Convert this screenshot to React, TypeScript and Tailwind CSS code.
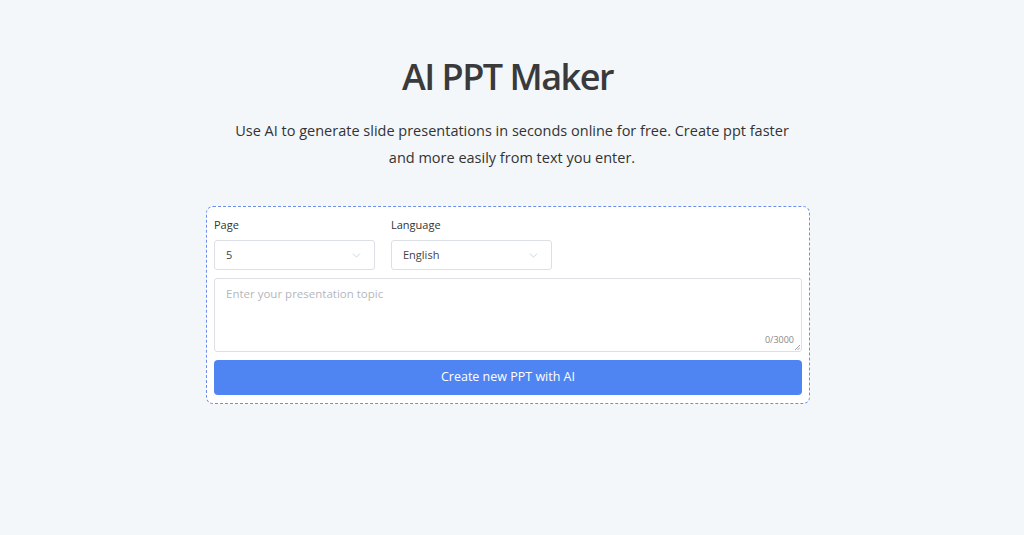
import { ChevronDown } from "lucide-react";

function FieldSelect({ label, value }: { label: string; value: string }) {
  return (
    <div className="w-[161px]">
      <div className="mb-[7px] text-[11px] leading-[16px] text-[#333]">{label}</div>
      <div className="flex h-[30px] items-center justify-between rounded-[3px] border border-[#dcdfe6] bg-white px-[11px] text-[11px] text-[#444]">
        <span>{value}</span>
        <ChevronDown className="h-[13px] w-[13px] text-[#b8bcc4]" strokeWidth={1.2} />
      </div>
    </div>
  );
}

export default function App() {
  return (
    <main
      className="min-h-[535px] bg-[#f4f7fa] text-[#333]"
      style={{ fontFamily: '"Open Sans", "Noto Sans", sans-serif' }}
    >
      <div className="flex flex-col items-center pt-[52px]">
        <h1 className="mr-[9px] text-[36px] font-semibold leading-[50px] tracking-[-1.5px] text-[#3a3a3a]">
          AI PPT Maker
        </h1>
        <p className="mt-[15px] w-[580px] text-center text-[14.5px] leading-[27px] text-[#333]">
          Use AI to generate slide presentations in seconds online for free. Create ppt faster and more easily from text you enter.
        </p>

        <div className="mr-[8px] mt-[35px] w-[604px] rounded-[7px] border border-dashed border-[#6d8ef0] bg-white px-[7px] pb-[8px] pt-[10px]">
          <div className="flex gap-[16px]">
            <FieldSelect label="Page" value="5" />
            <FieldSelect label="Language" value="English" />
          </div>

          <div className="relative mt-[8px] h-[74px] rounded-[3px] border border-[#dcdfe6] bg-white">
            <div className="px-[11px] pt-[6px] text-[11.5px] text-[#b4b7bd]">Enter your presentation topic</div>
            <span className="absolute bottom-[5px] right-[7px] text-[9px] text-[#888]">0/3000</span>
            <svg className="absolute bottom-[1px] right-[1px]" width="6" height="6" viewBox="0 0 6 6">
              <path d="M1 6 L6 1 M3.5 6 L6 3.5" stroke="#888" strokeWidth="0.8" />
            </svg>
          </div>

          <button
            type="button"
            className="mt-[8px] flex h-[35px] w-full items-center justify-center rounded-[4px] bg-[#4f85f2] text-[12.5px] text-white"
          >
            Create new PPT with AI
          </button>
        </div>
      </div>
    </main>
  );
}
